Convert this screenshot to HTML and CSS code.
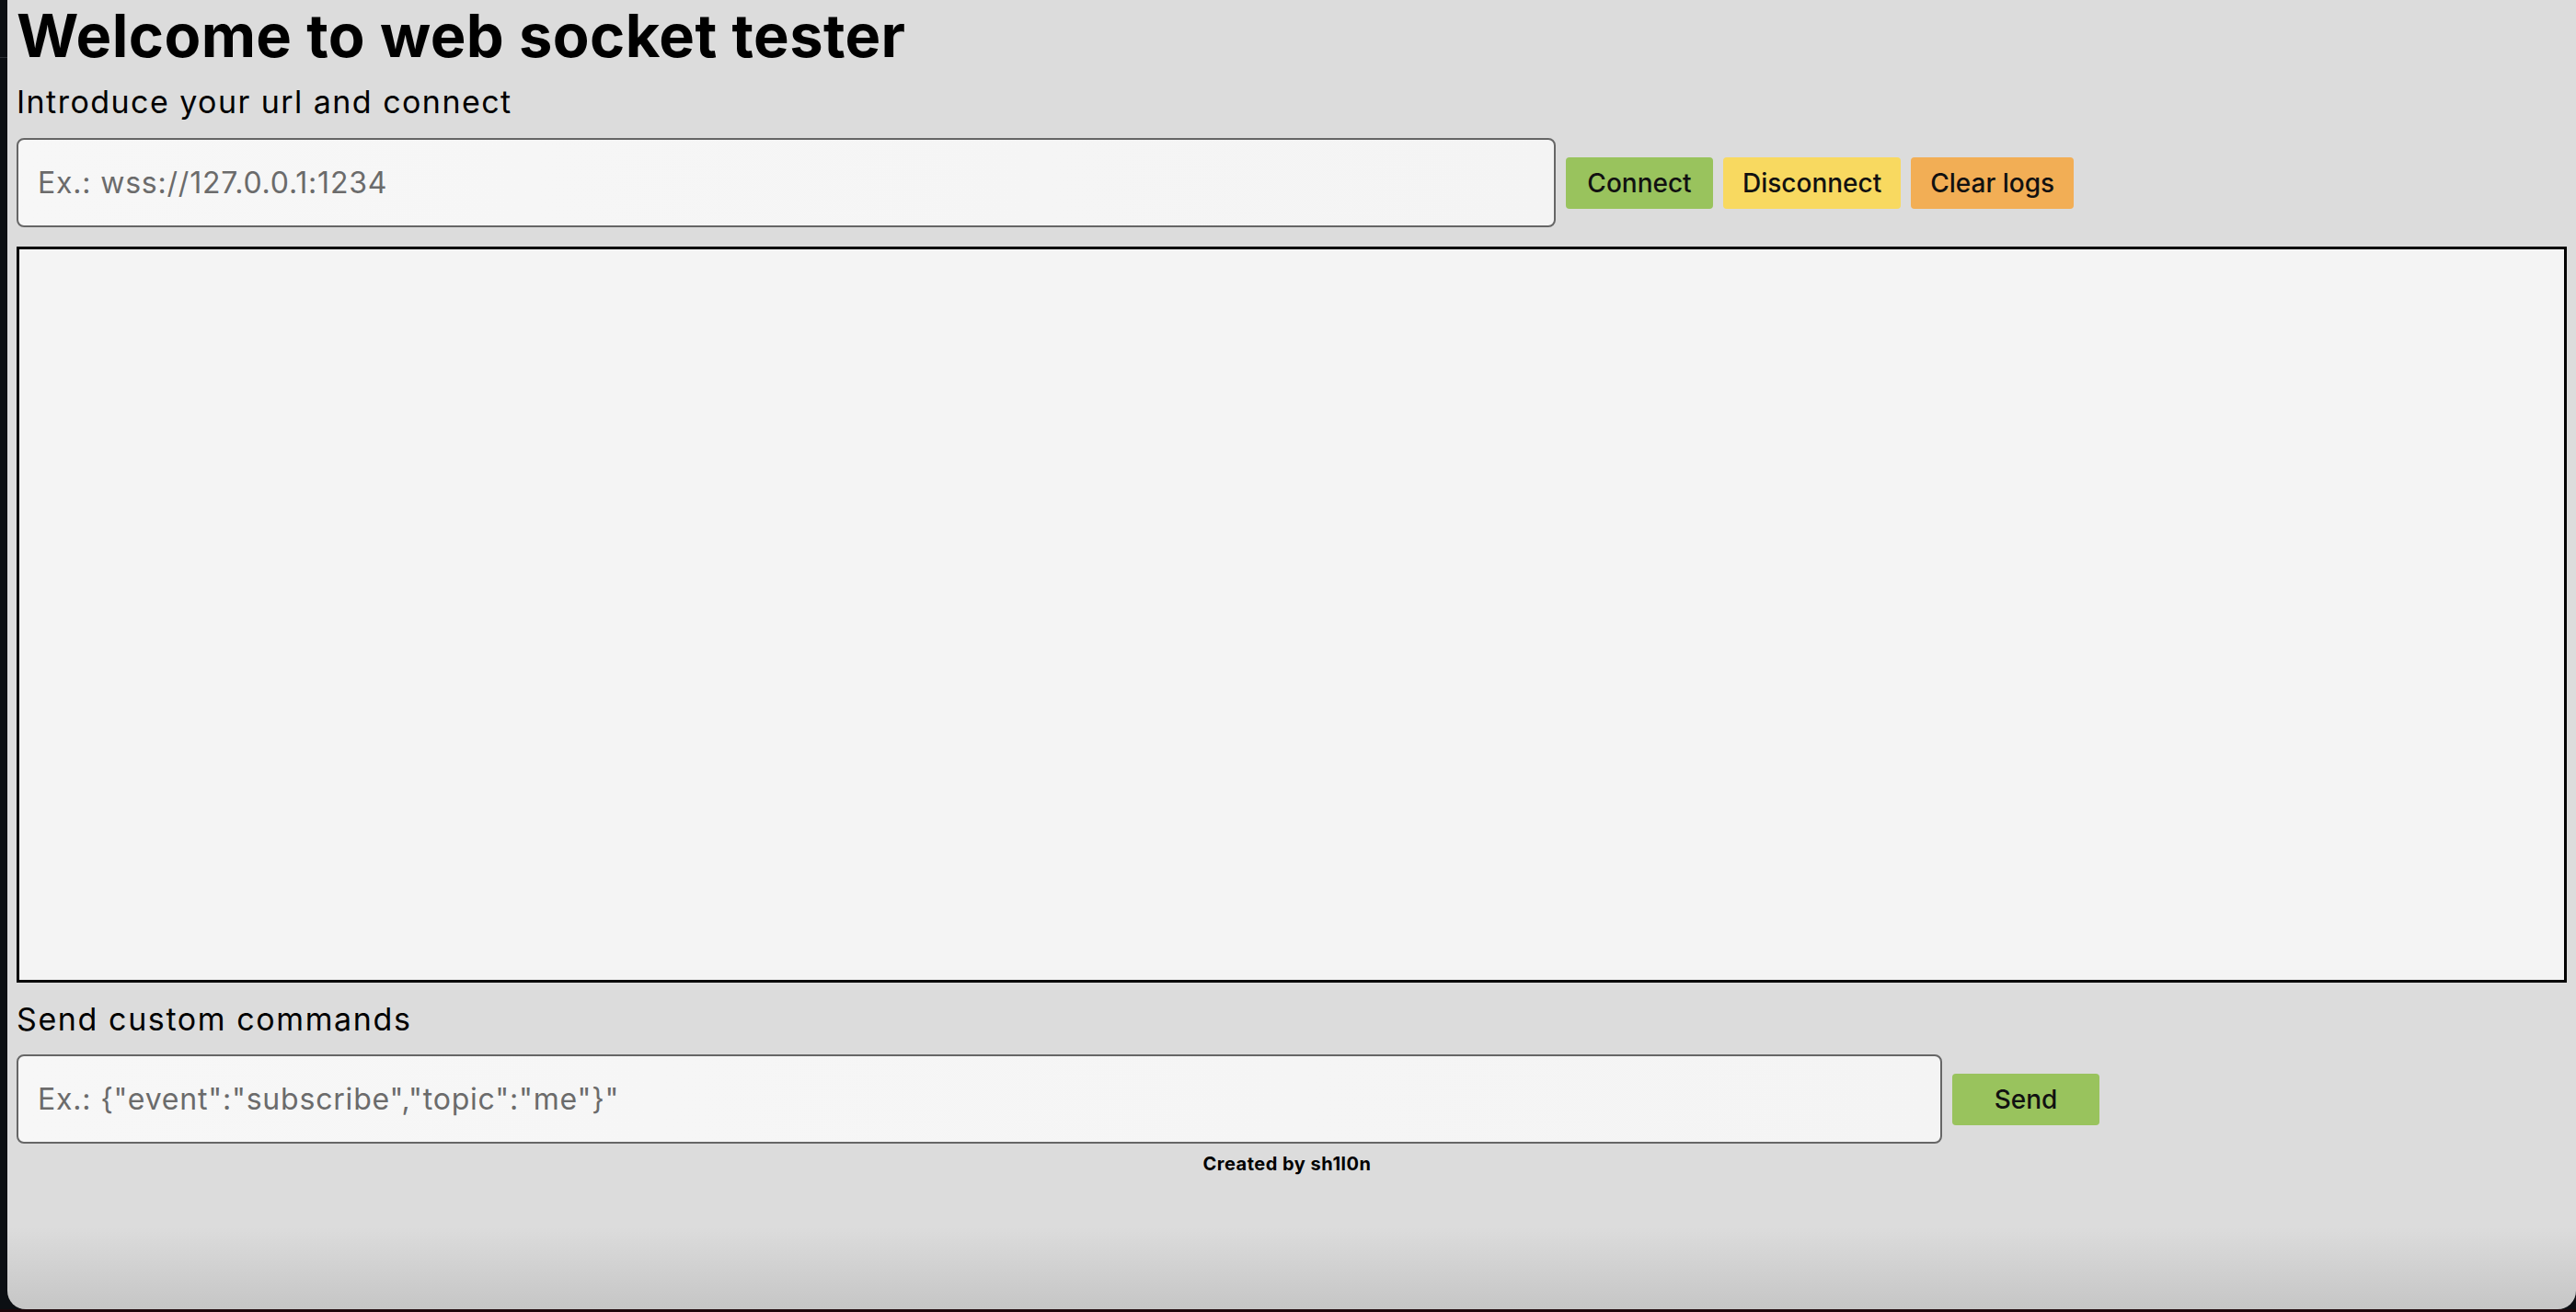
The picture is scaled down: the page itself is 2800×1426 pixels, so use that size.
FILE: index.html
```html
<!DOCTYPE html>
<html lang="en">
<head>
<meta charset="utf-8">
<title>Web socket tester</title>
<link rel="stylesheet" href="styles.css">
</head>
<body>
<div class="screen">
  <div class="top">
    <div class="strip"><div class="strip-head"></div></div>
    <div class="window">
      <h1 class="title">Welcome to web socket tester</h1>
      <h3 class="subtitle">Introduce your url and connect</h3>
      <div class="row">
        <input class="field field-url" type="text" placeholder="Ex.: wss://127.0.0.1:1234">
        <button class="btn btn-green">Connect</button>
        <button class="btn btn-yellow">Disconnect</button>
        <button class="btn btn-orange">Clear logs</button>
      </div>
      <div class="logs"></div>
      <h3 class="subtitle subtitle-send">Send custom commands</h3>
      <div class="row row-send">
        <input class="field field-cmd" type="text" placeholder='Ex.: {"event":"subscribe","topic":"me"}"'>
        <button class="btn btn-green">Send</button>
      </div>
      <footer class="footer">Created by sh1l0n</footer>
      <div class="shade"></div>
    </div>
  </div>
  <div class="bottom-band"></div>
</div>
</body>
</html>
```

FILE: styles.css
```css
* { box-sizing: border-box; }

html, body {
  margin: 0;
  padding: 0;
  background: #0c0f13;
}

body {
  font-family: "Inter", "Liberation Sans", sans-serif;
  color: #000;
}

.screen {
  display: flex;
  flex-direction: column;
  width: 2800px;
  height: 1426px;
  overflow: hidden;
}

.top {
  display: flex;
  height: 1423px;
  background: #0c0f13;
}

.strip {
  width: 8px;
  flex: none;
  display: flex;
  flex-direction: column;
}

.strip-head {
  height: 63px;
  border-bottom: 1px solid #2b2e33;
}

.window {
  flex: 1;
  position: relative;
  display: flex;
  flex-direction: column;
  align-items: flex-start;
  padding: 0 10px;
  background: #dcdcdc;
  border-radius: 0 0 20px 20px;
  overflow: hidden;
}

.bottom-band {
  height: 3px;
  background: #1d070b;
}

.title {
  margin: 7px 0 0;
  font-size: 65px;
  line-height: 64px;
  font-weight: 700;
  letter-spacing: 0.4px;
}

.subtitle {
  margin: 20px 0 0;
  font-size: 34px;
  line-height: 40px;
  font-weight: 400;
  letter-spacing: 1.45px;
}

.subtitle-send {
  margin-top: 20px;
  letter-spacing: 1.6px;
}

.row {
  display: flex;
  align-items: center;
  gap: 11px;
  margin-top: 19px;
}

.row-send {
  margin-top: 18px;
}

.field {
  height: 97px;
  padding: 0 21px;
  border: 2px solid #666;
  border-radius: 8px;
  background: linear-gradient(to right, #f7f7f7, #f4f4f4);
  font-family: "Inter", "Liberation Sans", sans-serif;
  font-size: 32px;
  letter-spacing: 0.8px;
  color: #000;
  outline: none;
}

.field::placeholder {
  color: #6b6b6b;
}

.field-url { width: 1673px; }
.field-cmd { width: 2093px; }

.btn {
  height: 56px;
  min-width: 160px;
  padding: 0 21px;
  border: none;
  border-radius: 4px;
  font-family: "Inter", "Liberation Sans", sans-serif;
  font-size: 28px;
  font-weight: 500;
  color: #111;
  text-align: center;
}

.btn-green { background: #99c35d; }
.btn-yellow { background: #f8d960; }
.btn-orange { background: #f2ae55; }

.logs {
  align-self: stretch;
  margin-top: 21px;
  height: 800px;
  border: 3px solid #000;
  background: #f4f4f4;
}

.footer {
  align-self: stretch;
  margin-top: 11px;
  padding-right: 10px;
  text-align: center;
  font-size: 20px;
  line-height: 23px;
  font-weight: 700;
  letter-spacing: 0.5px;
}

.shade {
  position: absolute;
  left: 0;
  right: 0;
  bottom: 0;
  height: 90px;
  background: linear-gradient(to bottom, rgba(0,0,0,0), rgba(0,0,0,0.1));
  pointer-events: none;
}
```
